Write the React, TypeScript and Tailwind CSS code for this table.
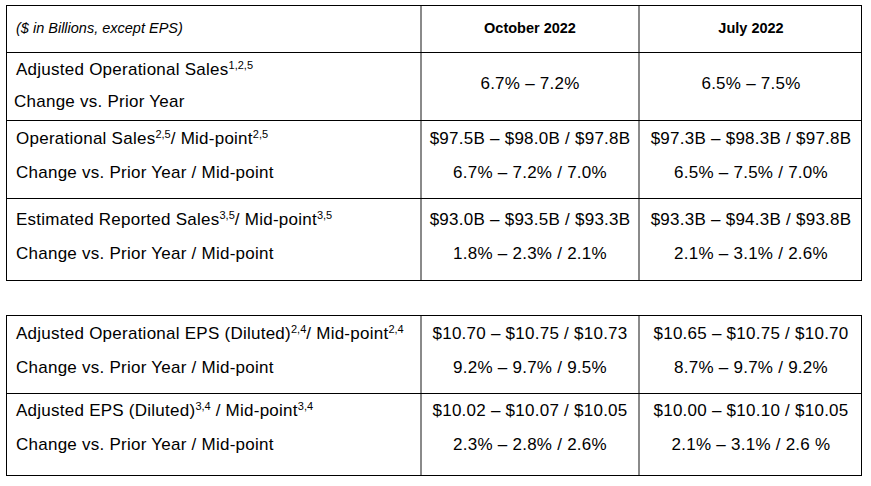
const font = { fontFamily: '"Liberation Sans", Arial, sans-serif' };

function Sup({ children }: { children: React.ReactNode }) {
  return <span className="relative -top-[6px] text-[11px] leading-none tracking-normal">{children}</span>;
}

type Row = {
  label: React.ReactNode;
  sub: string;
  oct: string[];
  jul: string[];
  h: string;
  pt: string;
};

const salesRows: Row[] = [
  {
    label: (
      <>
        Operational Sales<Sup>2,5</Sup>/ Mid-point<Sup>2,5</Sup>
      </>
    ),
    sub: "Change vs. Prior Year / Mid-point",
    oct: ["$97.5B – $98.0B / $97.8B", "6.7% – 7.2% / 7.0%"],
    jul: ["$97.3B – $98.3B / $97.8B", "6.5% – 7.5% / 7.0%"],
    h: "h-[78px]",
    pt: "pt-px",
  },
  {
    label: (
      <>
        Estimated Reported Sales<Sup>3,5</Sup>/ Mid-point<Sup>3,5</Sup>
      </>
    ),
    sub: "Change vs. Prior Year / Mid-point",
    oct: ["$93.0B – $93.5B / $93.3B", "1.8% – 2.3% / 2.1%"],
    jul: ["$93.3B – $94.3B / $93.8B", "2.1% – 3.1% / 2.6%"],
    h: "h-[82px]",
    pt: "pt-[4px]",
  },
];

const epsRows: Row[] = [
  {
    label: (
      <>
        Adjusted Operational EPS (Diluted)<Sup>2,4</Sup>/ Mid-point<Sup>2,4</Sup>
      </>
    ),
    sub: "Change vs. Prior Year / Mid-point",
    oct: ["$10.70 – $10.75 / $10.73", "9.2% – 9.7% / 9.5%"],
    jul: ["$10.65 – $10.75 / $10.70", "8.7% – 9.7% / 9.2%"],
    h: "h-[78px]",
    pt: "pt-px",
  },
  {
    label: (
      <>
        Adjusted EPS (Diluted)<Sup>3,4</Sup> / Mid-point<Sup>3,4</Sup>
      </>
    ),
    sub: "Change vs. Prior Year / Mid-point",
    oct: ["$10.02 – $10.07 / $10.05", "2.3% – 2.8% / 2.6%"],
    jul: ["$10.00 – $10.10 / $10.05", "2.1% – 3.1% / 2.6 %"],
    h: "h-[82px]",
    pt: "pt-0",
  },
];

function DataRow({ row }: { row: Row }) {
  return (
    <div className={`grid grid-cols-[413px_218px_224px] border-b border-black ${row.h}`}>
      <div className={`pl-[9px] ${row.pt} leading-[34px]`}>
        <div className="whitespace-nowrap">{row.label}</div>
        <div>{row.sub}</div>
      </div>
      <div className={`border-l-2 border-[#8a8a8a] text-center ${row.pt} leading-[34px]`}>
        {row.oct.map((t) => (
          <div key={t}>{t}</div>
        ))}
      </div>
      <div className={`border-l-2 border-[#8a8a8a] text-center ${row.pt} leading-[34px]`}>
        {row.jul.map((t) => (
          <div key={t}>{t}</div>
        ))}
      </div>
    </div>
  );
}

export default function App() {
  return (
    <div className="w-[871px] h-[486px] bg-white pt-[5px] pl-[6px] text-black text-[17px] tracking-[0.25px]" style={font}>
      {/* sales guidance */}
      <div className="w-[856px] border border-b-0 border-black">
        <div className="grid grid-cols-[413px_218px_224px] h-[47px] border-b border-black text-[14.5px] tracking-normal">
          <div className="flex items-center pl-[9px] italic">($ in Billions, except EPS)</div>
          <div className="flex items-center justify-center border-l-2 border-[#8a8a8a] font-bold">October 2022</div>
          <div className="flex items-center justify-center border-l-2 border-[#8a8a8a] font-bold">July 2022</div>
        </div>

        <div className="grid grid-cols-[413px_218px_224px] h-[68px] border-b border-black">
          <div className="pl-[9px] pt-px leading-[32px]">
            <div>
              Adjusted Operational Sales<Sup>1,2,5</Sup>
            </div>
            <div className="-ml-[2px]">Change vs. Prior Year</div>
          </div>
          <div className="border-l-2 border-[#8a8a8a] text-center pt-[15px] leading-[32px]">6.7% – 7.2%</div>
          <div className="border-l-2 border-[#8a8a8a] text-center pt-[15px] leading-[32px]">6.5% – 7.5%</div>
        </div>

        {salesRows.map((r, i) => (
          <DataRow key={i} row={r} />
        ))}
      </div>

      {/* EPS guidance */}
      <div className="mt-[34px] w-[856px] border border-b-0 border-black">
        {epsRows.map((r, i) => (
          <DataRow key={i} row={r} />
        ))}
      </div>
    </div>
  );
}
